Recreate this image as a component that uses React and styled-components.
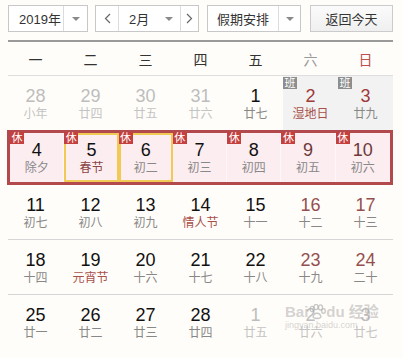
import React from 'react'
import styled, { createGlobalStyle } from 'styled-components'

const GlobalStyle = createGlobalStyle`
    body {
        margin: 0;
        background: #fffdf9;
        font-family: "Liberation Sans", "Noto Sans CJK SC", sans-serif;
    }
`

const tones = {
    normal: '#111',
    other: '#bdbdbd',
    weekend: '#94504f',
    work: '#9e3a3a',
    rest: '#6e3a3a',
}

const lunarTones = {
    normal: '#888',
    other: '#c4c4c4',
    fest: '#a8504b',
    spring: '#8a4545',
}

const Wrap = styled.div`
    position: relative;
    width: 385px;
    padding: 5px 0 0 8px;
`

const Toolbar = styled.div`
    display: flex;
    height: 27px;
`

const Select = styled.div`
    display: flex;
    box-sizing: border-box;
    width: ${props => props.$w}px;
    margin-right: ${props => props.$gap || 0}px;
    border: 1px solid #c8c8c8;
    background: #fff;
    font-size: 13px;
    color: #333;
`

const Seg = styled.div`
    display: flex;
    align-items: center;
    justify-content: ${props => props.$justify || 'center'};
    gap: 10px;
    box-sizing: border-box;
    width: ${props => props.$w}px;
    padding-left: ${props => props.$pl || 0}px;
    border-left: ${props => props.$divider ? '1px solid #dcdcdc' : 'none'};
`

const Caret = styled.span`
    width: 0;
    height: 0;
    border-left: 4px solid transparent;
    border-right: 4px solid transparent;
    border-top: 4px solid #8a8a8a;
`

const TodayButton = styled.div`
    display: flex;
    align-items: center;
    justify-content: center;
    box-sizing: border-box;
    width: 83px;
    border: 1px solid #cbcbcb;
    background: linear-gradient(#fbfbfb, #efefef);
    font-size: 13px;
    color: #333;
`

const Rule = styled.div`
    height: 2px;
    margin-top: 8px;
    background: #9a9a9a;
`

const WeekHead = styled.div`
    display: grid;
    grid-template-columns: repeat(7, 1fr);
    align-items: center;
    height: 33px;
    border-bottom: 1px solid #dedede;
    font-size: 14px;
    text-align: center;
`

const WeekDay = styled.div`
    color: ${props => props.$color};
`

const Row = styled.div`
    display: grid;
    grid-template-columns: repeat(7, 1fr);
    border-bottom: ${props => props.$line ? '1px solid #d6d6d6' : 'none'};
`

const HolidayRow = styled.div`
    display: grid;
    grid-template-columns: repeat(7, 1fr);
    box-sizing: border-box;
    margin-left: -1px;
    border: 3px solid #b24a4d;
    background: #fcedf0;
`

const Cell = styled.div`
    position: relative;
    box-sizing: border-box;
    height: ${props => props.$h || 54}px;
    padding-top: ${props => props.$pt || 10}px;
    text-align: center;
    background: ${props => props.$bg || 'transparent'};
    border-right: ${props => props.$sep ? '1px solid #fff6f7' : 'none'};
    box-shadow: ${props => props.$gold ? 'inset 0 0 0 2px #f1c955' : 'none'};
`

const Num = styled.div`
    font-size: 18px;
    line-height: 20px;
    color: ${props => tones[props.$tone]};
`

const Lunar = styled.div`
    font-size: 12px;
    line-height: 16px;
    color: ${props => lunarTones[props.$tone]};
`

const Badge = styled.span`
    position: absolute;
    top: ${props => props.$top || 0}px;
    left: ${props => props.$left || 0}px;
    width: 14px;
    height: 12px;
    font-size: 11px;
    line-height: 12px;
    color: #fff;
    text-align: center;
    background: ${props => props.$kind === 'rest' ? '#c4403f' : '#8d8d8d'};
`

const Watermark = styled.div`
    position: absolute;
    left: 285px;
    top: 303px;
    color: rgba(175, 175, 175, 0.55);
    pointer-events: none;
`

const MarkLine = styled.div`
    display: flex;
    align-items: flex-end;
    font-size: ${props => props.$size}px;
    line-height: ${props => props.$size + 2}px;
    font-weight: ${props => props.$bold ? 'bold' : 'normal'};
`

const Chevron = ({ dir }) => (
    <svg width="7" height="11" viewBox="0 0 7 11">
        <polyline
            points={dir === 'left' ? '6,1 1.5,5.5 6,10' : '1,1 5.5,5.5 1,10'}
            fill="none"
            stroke="#666"
            strokeWidth="1.2"
        />
    </svg>
)

const Paw = () => (
    <svg width="18" height="16" viewBox="0 0 18 16">
        <g fill="none" stroke="rgba(175,175,175,0.7)" strokeWidth="1.3">
            <ellipse cx="4" cy="5" rx="2" ry="2.6" />
            <ellipse cx="8" cy="3" rx="2" ry="2.6" />
            <ellipse cx="12.5" cy="3.4" rx="2" ry="2.6" />
            <ellipse cx="15.5" cy="7" rx="1.8" ry="2.4" />
            <path d="M5 13 C6 8, 12 8, 13 13 C12 15, 6 15, 5 13 Z" />
        </g>
    </svg>
)

const weekdays = [
    ['一', '#333'], ['二', '#333'], ['三', '#333'], ['四', '#333'],
    ['五', '#333'], ['六', '#9a9a9a'], ['日', '#c0504d'],
]

const firstRow = [
    { d: 28, l: '小年', t: 'other', lt: 'other' },
    { d: 29, l: '廿四', t: 'other', lt: 'other' },
    { d: 30, l: '廿五', t: 'other', lt: 'other' },
    { d: 31, l: '廿六', t: 'other', lt: 'other' },
    { d: 1, l: '廿七', t: 'normal', lt: 'normal' },
    { d: 2, l: '湿地日', t: 'work', lt: 'fest', work: true },
    { d: 3, l: '廿九', t: 'work', lt: 'normal', work: true },
]

const holidays = [
    { d: 4, l: '除夕', t: 'normal', lt: 'normal' },
    { d: 5, l: '春节', t: 'normal', lt: 'spring', gold: true },
    { d: 6, l: '初二', t: 'normal', lt: 'normal', gold: true },
    { d: 7, l: '初三', t: 'normal', lt: 'normal' },
    { d: 8, l: '初四', t: 'normal', lt: 'normal' },
    { d: 9, l: '初五', t: 'rest', lt: 'normal' },
    { d: 10, l: '初六', t: 'rest', lt: 'normal' },
]

const week = (days, lunars, extra = {}) =>
    days.map((d, i) => ({
        d,
        l: lunars[i],
        t: i >= 5 ? 'weekend' : 'normal',
        lt: 'normal',
        ...(extra[i] || {}),
    }))

const laterRows = [
    week([11, 12, 13, 14, 15, 16, 17], ['初七', '初八', '初九', '情人节', '十一', '十二', '十三'], {
        3: { lt: 'fest' },
    }),
    week([18, 19, 20, 21, 22, 23, 24], ['十四', '元宵节', '十六', '十七', '十八', '十九', '二十'], {
        1: { lt: 'fest' },
    }),
    week([25, 26, 27, 28, 1, 2, 3], ['廿一', '廿二', '廿三', '廿四', '廿五', '廿六', '廿七'], {
        4: { t: 'other', lt: 'other' },
        5: { t: 'other', lt: 'other' },
        6: { t: 'other', lt: 'other' },
    }),
]

const DayBody = ({ day }) => (
    <>
        <Num $tone={day.t}>{day.d}</Num>
        <Lunar $tone={day.lt}>{day.l}</Lunar>
    </>
)

function App() {
    return (
        <Wrap>
            <GlobalStyle />
            <Toolbar>
                <Select $w={80} $gap={7}>
                    <Seg $w={55} $justify="flex-start" $pl={10}>2019年</Seg>
                    <Seg $w={24} $divider><Caret /></Seg>
                </Select>
                <Select $w={104} $gap={8}>
                    <Seg $w={22}><Chevron dir="left" /></Seg>
                    <Seg $w={62} $divider $justify="flex-start" $pl={10}>
                        2月
                        <Caret style={{ marginLeft: 6 }} />
                    </Seg>
                    <Seg $w={18} $divider><Chevron dir="right" /></Seg>
                </Select>
                <Select $w={94} $gap={9}>
                    <Seg $w={70}>假期安排</Seg>
                    <Seg $w={22} $divider><Caret /></Seg>
                </Select>
                <TodayButton>返回今天</TodayButton>
            </Toolbar>
            <Rule />
            <WeekHead>
                {weekdays.map(([name, color]) => (
                    <WeekDay key={name} $color={color}>{name}</WeekDay>
                ))}
            </WeekHead>

            <Row>
                {firstRow.map(day => (
                    <Cell key={day.d} $bg={day.work ? '#f2f2f2' : null}>
                        {day.work && <Badge $kind="work" $top={1}>班</Badge>}
                        <DayBody day={day} />
                    </Cell>
                ))}
            </Row>

            <HolidayRow>
                {holidays.map((day, i) => (
                    <Cell key={day.d} $h={49} $pt={7} $gold={day.gold} $sep={i < 6 && !day.gold}>
                        <Badge $kind="rest" $top={-1}>休</Badge>
                        <DayBody day={day} />
                    </Cell>
                ))}
            </HolidayRow>

            {laterRows.map((days, r) => (
                <Row key={r} $line={r < 2}>
                    {days.map((day, i) => (
                        <Cell key={i}>
                            <DayBody day={day} />
                        </Cell>
                    ))}
                </Row>
            ))}

            <Watermark>
                <MarkLine $size={15} $bold>
                    Bai<Paw />du 经验
                </MarkLine>
                <MarkLine $size={9}>jingyan.baidu.com</MarkLine>
            </Watermark>
        </Wrap>
    )
}

export default App
